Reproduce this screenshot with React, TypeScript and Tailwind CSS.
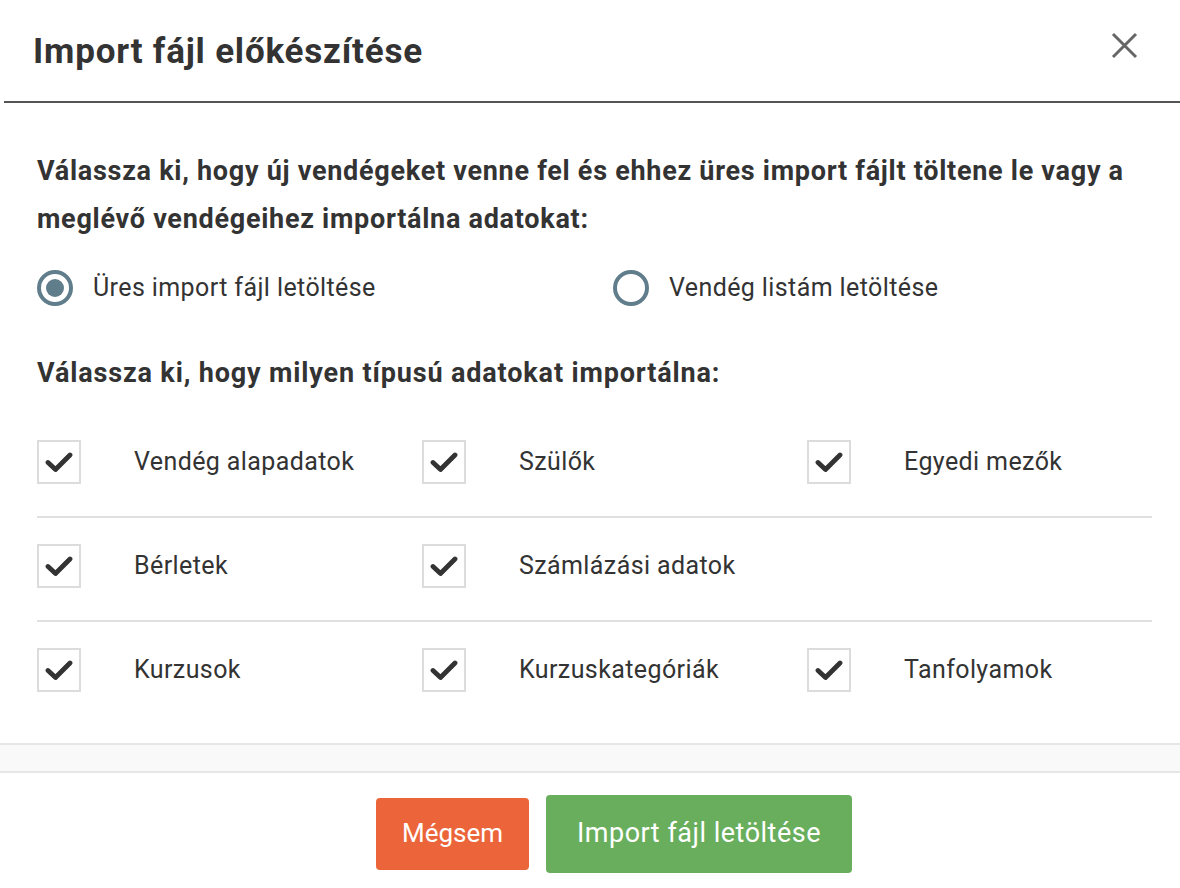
const rows = [
  ["Vendég alapadatok", "Szülők", "Egyedi mezők"],
  ["Bérletek", "Számlázási adatok", null],
  ["Kurzusok", "Kurzuskategóriák", "Tanfolyamok"],
];

const Radio = ({ checked, label }: { checked?: boolean; label: string }) => (
  <label className="flex items-center gap-[20px]">
    <span className="w-[36px] h-[36px] rounded-full border-[4px] border-[#607d8b] flex items-center justify-center">
      {checked && <span className="w-[18px] h-[18px] rounded-full bg-[#607d8b]" />}
    </span>
    <span className="text-[25px] tracking-[0.4px] text-[#333]">{label}</span>
  </label>
);

const Check = ({ label }: { label: string }) => (
  <div className="flex items-center gap-[53px]">
    <span className="w-[44px] h-[44px] border-2 border-[#dcdcdc] flex items-center justify-center">
      <svg width="28" height="22" viewBox="0 0 28 22" fill="none">
        <path d="M3 11.5 L10.5 18.5 L25 4" stroke="#333" strokeWidth="4.8" strokeLinecap="round" strokeLinejoin="round" />
      </svg>
    </span>
    <span className="text-[25px] tracking-[0.4px] text-[#333]">{label}</span>
  </div>
);

export default function App() {
  return (
    <div className="w-[1180px] h-[888px] bg-white overflow-hidden font-['Roboto',sans-serif] text-[#333]">
      {/* header */}
      <div className="ml-[4px] h-[103px] border-b-2 border-[#555] flex justify-between pl-[29px] pr-[42px]">
        <h1 className="mt-[28px] text-[35px] leading-[48px] font-bold text-[#333] tracking-[0.8px]">Import fájl előkészítése</h1>
        <svg className="mt-[32px]" width="27" height="27" viewBox="0 0 27 27" fill="none">
          <path d="M2 2 L25 25 M25 2 L2 25" stroke="#666" strokeWidth="3" />
        </svg>
      </div>

      {/* body */}
      <div className="pl-[37px] pr-[28px] pt-[44px]">
        <p className="text-[27px] font-bold leading-[48px] tracking-[0.72px]">
          Válassza ki, hogy új vendégeket venne fel és ehhez üres import fájlt töltene le vagy a meglévő vendégeihez importálna adatokat:
        </p>
        <div className="grid grid-cols-[576px_1fr] mt-[26px]">
          <Radio checked label="Üres import fájl letöltése" />
          <Radio label="Vendég listám letöltése" />
        </div>
        <p className="text-[27px] font-bold leading-[48px] tracking-[0.85px] mt-[42px]">
          Válassza ki, hogy milyen típusú adatokat importálna:
        </p>
        <div className="mt-[17px]">
          {rows.map((row, i) => (
            <div
              key={i}
              className={`grid grid-cols-[385px_385px_1fr] pt-[26px] pb-[32px] ${i < rows.length - 1 ? "border-b-2 border-[#e0e0e0]" : ""}`}
            >
              {row.map((c, j) => (c ? <Check key={j} label={c} /> : <div key={j} />))}
            </div>
          ))}
        </div>
      </div>

      {/* footer */}
      <div className="mt-[19px] h-[30px] bg-[#f9f9f9] border-y-2 border-[#e6e6e6]" />
      <div className="flex justify-center items-center gap-[17px] pl-[48px] pt-[22px]">
        <button className="h-[72px] w-[153px] rounded-[4px] bg-[#ec6439] text-white text-[26px]">Mégsem</button>
        <button className="h-[78px] w-[306px] rounded-[4px] bg-[#68ae5c] text-white text-[27px] tracking-[0.5px]">Import fájl letöltése</button>
      </div>
    </div>
  );
}
